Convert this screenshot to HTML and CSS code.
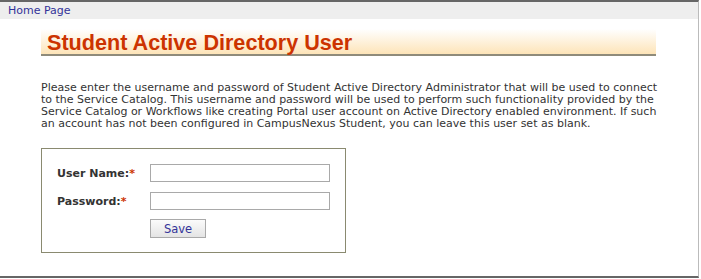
FILE: index.html
```html
<!DOCTYPE html>
<html>
<head>
<meta charset="utf-8">
<link rel="stylesheet" href="styles.css">
</head>
<body>
<div class="page">
  <div class="nav"><a class="nav-link" href="#">Home Page</a></div>
  <div class="content">
    <h1 class="title">Student Active Directory User</h1>
    <p class="intro">Please enter the username and password of Student Active Directory Administrator that will be used to connect<br>to the Service Catalog. This username and password will be used to perform such functionality provided by the<br>Service Catalog or Workflows like creating Portal user account on Active Directory enabled environment. If such<br>an account has not been configured in CampusNexus Student, you can leave this user set as blank.</p>
    <div class="form-box">
      <label class="label" for="un">User Name:<span class="req">*</span></label>
      <input class="field" id="un" type="text">
      <label class="label" for="pw">Password:<span class="req">*</span></label>
      <input class="field" id="pw" type="password">
      <span></span>
      <div><button class="btn" type="button">Save</button></div>
    </div>
  </div>
</div>
</body>
</html>
```
FILE: styles.css
```css
html, body {
  margin: 0;
  padding: 0;
  background: #fff;
}
.page {
  width: 698px;
  height: 274px;
  border-top: 2px solid #666;
  border-bottom: 2px solid #666;
  border-right: 1px solid #bbb;
  font-family: "DejaVu Sans", Verdana, sans-serif;
  font-size: 11px;
  color: #333;
}
.nav {
  height: 17px;
  background: #eee;
  padding-left: 8px;
  line-height: 17px;
}
.nav-link {
  color: #333399;
  text-decoration: none;
}
.content {
  padding-left: 41px;
}
.title {
  margin: 10px 0 0 0;
  width: 609px;
  height: 25px;
  padding-left: 6px;
  background: linear-gradient(to bottom, #ffffff 0%, #fde4b8 100%);
  border-bottom: 2px solid #8f8b7a;
  font-family: "Liberation Sans", Arial, sans-serif;
  font-size: 21.6px;
  font-weight: bold;
  line-height: 27px;
  color: #cc3300;
}
.intro {
  margin: 26px 0 0 0;
  line-height: 12px;
  white-space: nowrap;
}
.form-box {
  margin-top: 18px;
  width: 288px;
  border: 1px solid #8a8a70;
  padding: 15px 0 14px 15px;
  display: grid;
  grid-template-columns: 93px 180px;
  row-gap: 10px;
  align-items: center;
}
.label {
  font-weight: bold;
  font-size: 11px;
}
.req {
  color: #cc3300;
}
.field {
  box-sizing: border-box;
  width: 180px;
  height: 18px;
  margin: 0;
  border: 1px solid #a9a9a9;
  padding: 0 2px;
  font-family: inherit;
  font-size: 11px;
}
.btn {
  margin-top: -1px;
  width: 56px;
  height: 19px;
  padding: 0;
  border: 1px solid #a9a9a9;
  background: linear-gradient(to bottom, #fbfbfb 0%, #e4e4e4 100%);
  color: #333399;
  font-family: "DejaVu Sans", Verdana, sans-serif;
  font-size: 11.5px;
}
```
